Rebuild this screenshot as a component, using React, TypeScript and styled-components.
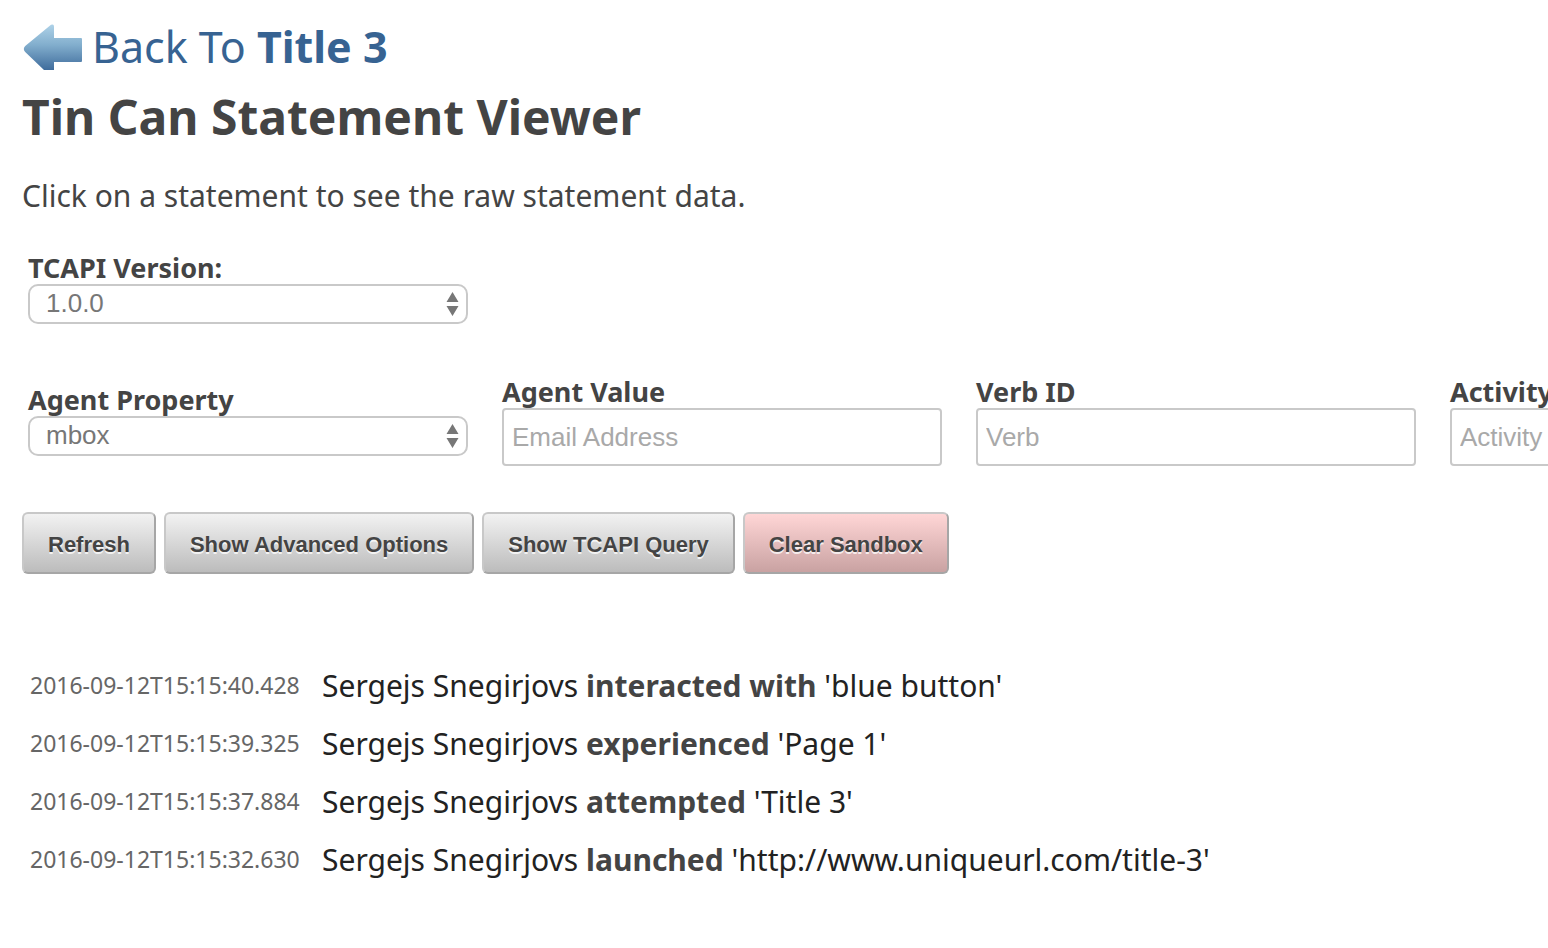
import React from "react";
import styled, { createGlobalStyle, css } from "styled-components";

const GlobalStyle = createGlobalStyle`
  *, *::before, *::after { box-sizing: border-box; }
  body {
    margin: 0;
    background: #fff;
    color: #444;
    font-family: "Lucida Grande", "Noto Sans", sans-serif;
  }
`;

const Page = styled.main`
  padding: 20px 0 58px 22px;
  overflow-x: hidden;
`;

const BackLink = styled.a`
  display: flex;
  align-items: center;
  gap: 10px;
  height: 54px;
  color: #376392;
  font-size: 43px;
  line-height: 54px;
  text-decoration: none;
  white-space: nowrap;
`;

const Heading = styled.h1`
  margin: 11px 0 0;
  font-size: 48px;
  line-height: 64px;
  font-weight: 700;
`;

const Intro = styled.p`
  margin: 25px 0 0;
  font-size: 30px;
  line-height: 44px;
`;

const Form = styled.form`
  margin-top: 34px;
`;

const FieldRow = styled.div`
  display: flex;
  align-items: flex-end;
  gap: 34px;
  padding-left: 6px;

  & + & {
    margin-top: 42px;
  }
`;

const Field = styled.div`
  flex: 0 0 440px;
`;

const Label = styled.label`
  display: block;
  font-size: 27px;
  line-height: 32px;
  font-weight: 700;
  white-space: nowrap;
`;

const SelectBox = styled.div`
  position: relative;
  margin-bottom: 10px;

  svg {
    position: absolute;
    top: 8px;
    right: 9px;
    pointer-events: none;
  }
`;

const controlFont = css`
  width: 100%;
  border: 2px solid #c9c9c9;
  background: #fff;
  font-family: "Liberation Sans", sans-serif;
  font-size: 26px;
`;

const Select = styled.select`
  ${controlFont}
  display: block;
  height: 40px;
  padding: 0 32px 2px 16px;
  border-radius: 10px;
  color: #777;
  appearance: none;
`;

const Input = styled.input`
  ${controlFont}
  display: block;
  height: 58px;
  padding: 0 8px;
  border-radius: 4px;
  color: #444;

  &::placeholder {
    color: #a9a9a9;
    opacity: 1;
  }
`;

const ButtonRow = styled.div`
  display: flex;
  gap: 8px;
  margin-top: 46px;
`;

const Button = styled.button<{ $danger?: boolean }>`
  height: 62px;
  padding: 3px 24px 0;
  border: 2px solid;
  border-color: #c8c8c8 #a6a6a6 #a6a6a6 #c8c8c8;
  border-radius: 6px;
  background: ${({ $danger }) =>
    $danger
      ? "linear-gradient(#ffd6d6, #c9a2a2)"
      : "linear-gradient(#f2f2f2, #bcbcbc)"};
  color: #444;
  font-family: "Liberation Sans", sans-serif;
  font-size: 22px;
  font-weight: 700;
  text-shadow: 0 2px 0 rgba(255, 255, 255, 0.75);
  white-space: nowrap;
`;

const Statements = styled.table`
  margin-top: 82px;
  border-collapse: collapse;
  white-space: nowrap;
`;

const TimeCell = styled.td`
  width: 300px;
  height: 58px;
  padding: 0 0 0 8px;
  color: #666;
  font-size: 23px;
`;

const StatementCell = styled.td`
  padding: 0;
  color: #222;
  font-size: 30px;
  cursor: pointer;
`;

const Verb = styled.strong`
  color: #444;
`;

const statements = [
  { time: "2016-09-12T15:15:40.428", verb: "interacted with", object: "blue button" },
  { time: "2016-09-12T15:15:39.325", verb: "experienced", object: "Page 1" },
  { time: "2016-09-12T15:15:37.884", verb: "attempted", object: "Title 3" },
  { time: "2016-09-12T15:15:32.630", verb: "launched", object: "http://www.uniqueurl.com/title-3" },
];

const BackArrow = () => (
  <svg width="60" height="46" viewBox="0 0 60 46" aria-hidden="true">
    <defs>
      <linearGradient id="arrow" x1="0" y1="0" x2="0" y2="1">
        <stop offset="0" stopColor="#aed2e8" />
        <stop offset="0.45" stopColor="#82aecd" />
        <stop offset="1" stopColor="#3f6c9c" />
      </linearGradient>
    </defs>
    <path
      d="M29 0.8Q32 -0.5 32 2.5V14H59Q60 14 60 15V37Q60 38 59 38H32V46H22L3.2 28Q0.4 25 3.2 22Z"
      fill="url(#arrow)"
    />
  </svg>
);

const Arrows = () => (
  <svg width="13" height="24" viewBox="0 0 13 24" aria-hidden="true">
    <path d="M6.5 0L12.5 10H0.5ZM0.5 14H12.5L6.5 24Z" fill="#777" />
  </svg>
);

function SelectField({ id, label, options }: { id: string; label: string; options: string[] }) {
  return (
    <Field>
      <Label htmlFor={id}>{label}</Label>
      <SelectBox>
        <Select id={id}>
          {options.map((o) => (
            <option key={o}>{o}</option>
          ))}
        </Select>
        <Arrows />
      </SelectBox>
    </Field>
  );
}

function TextField({ id, label, placeholder }: { id: string; label: string; placeholder: string }) {
  return (
    <Field>
      <Label htmlFor={id}>{label}</Label>
      <Input id={id} type="text" placeholder={placeholder} />
    </Field>
  );
}

export default function App() {
  return (
    <>
      <GlobalStyle />
      <Page>
        <BackLink href="#">
          <BackArrow />
          <span>
            Back To <strong>Title 3</strong>
          </span>
        </BackLink>
        <Heading>Tin Can Statement Viewer</Heading>
        <Intro>Click on a statement to see the raw statement data.</Intro>
        <Form onSubmit={(e) => e.preventDefault()}>
          <FieldRow>
            <SelectField id="version" label="TCAPI Version:" options={["1.0.0"]} />
          </FieldRow>
          <FieldRow>
            <SelectField id="agent-property" label="Agent Property" options={["mbox"]} />
            <TextField id="agent-value" label="Agent Value" placeholder="Email Address" />
            <TextField id="verb" label="Verb ID" placeholder="Verb" />
            <TextField id="activity" label="Activity" placeholder="Activity" />
          </FieldRow>
          <ButtonRow>
            <Button type="submit">Refresh</Button>
            <Button type="button">Show Advanced Options</Button>
            <Button type="button">Show TCAPI Query</Button>
            <Button type="button" $danger>Clear Sandbox</Button>
          </ButtonRow>
        </Form>
        <Statements>
          <tbody>
            {statements.map((s) => (
              <tr key={s.time}>
                <TimeCell>{s.time}</TimeCell>
                <StatementCell>
                  Sergejs Snegirjovs <Verb>{s.verb}</Verb> '{s.object}'
                </StatementCell>
              </tr>
            ))}
          </tbody>
        </Statements>
      </Page>
    </>
  );
}
